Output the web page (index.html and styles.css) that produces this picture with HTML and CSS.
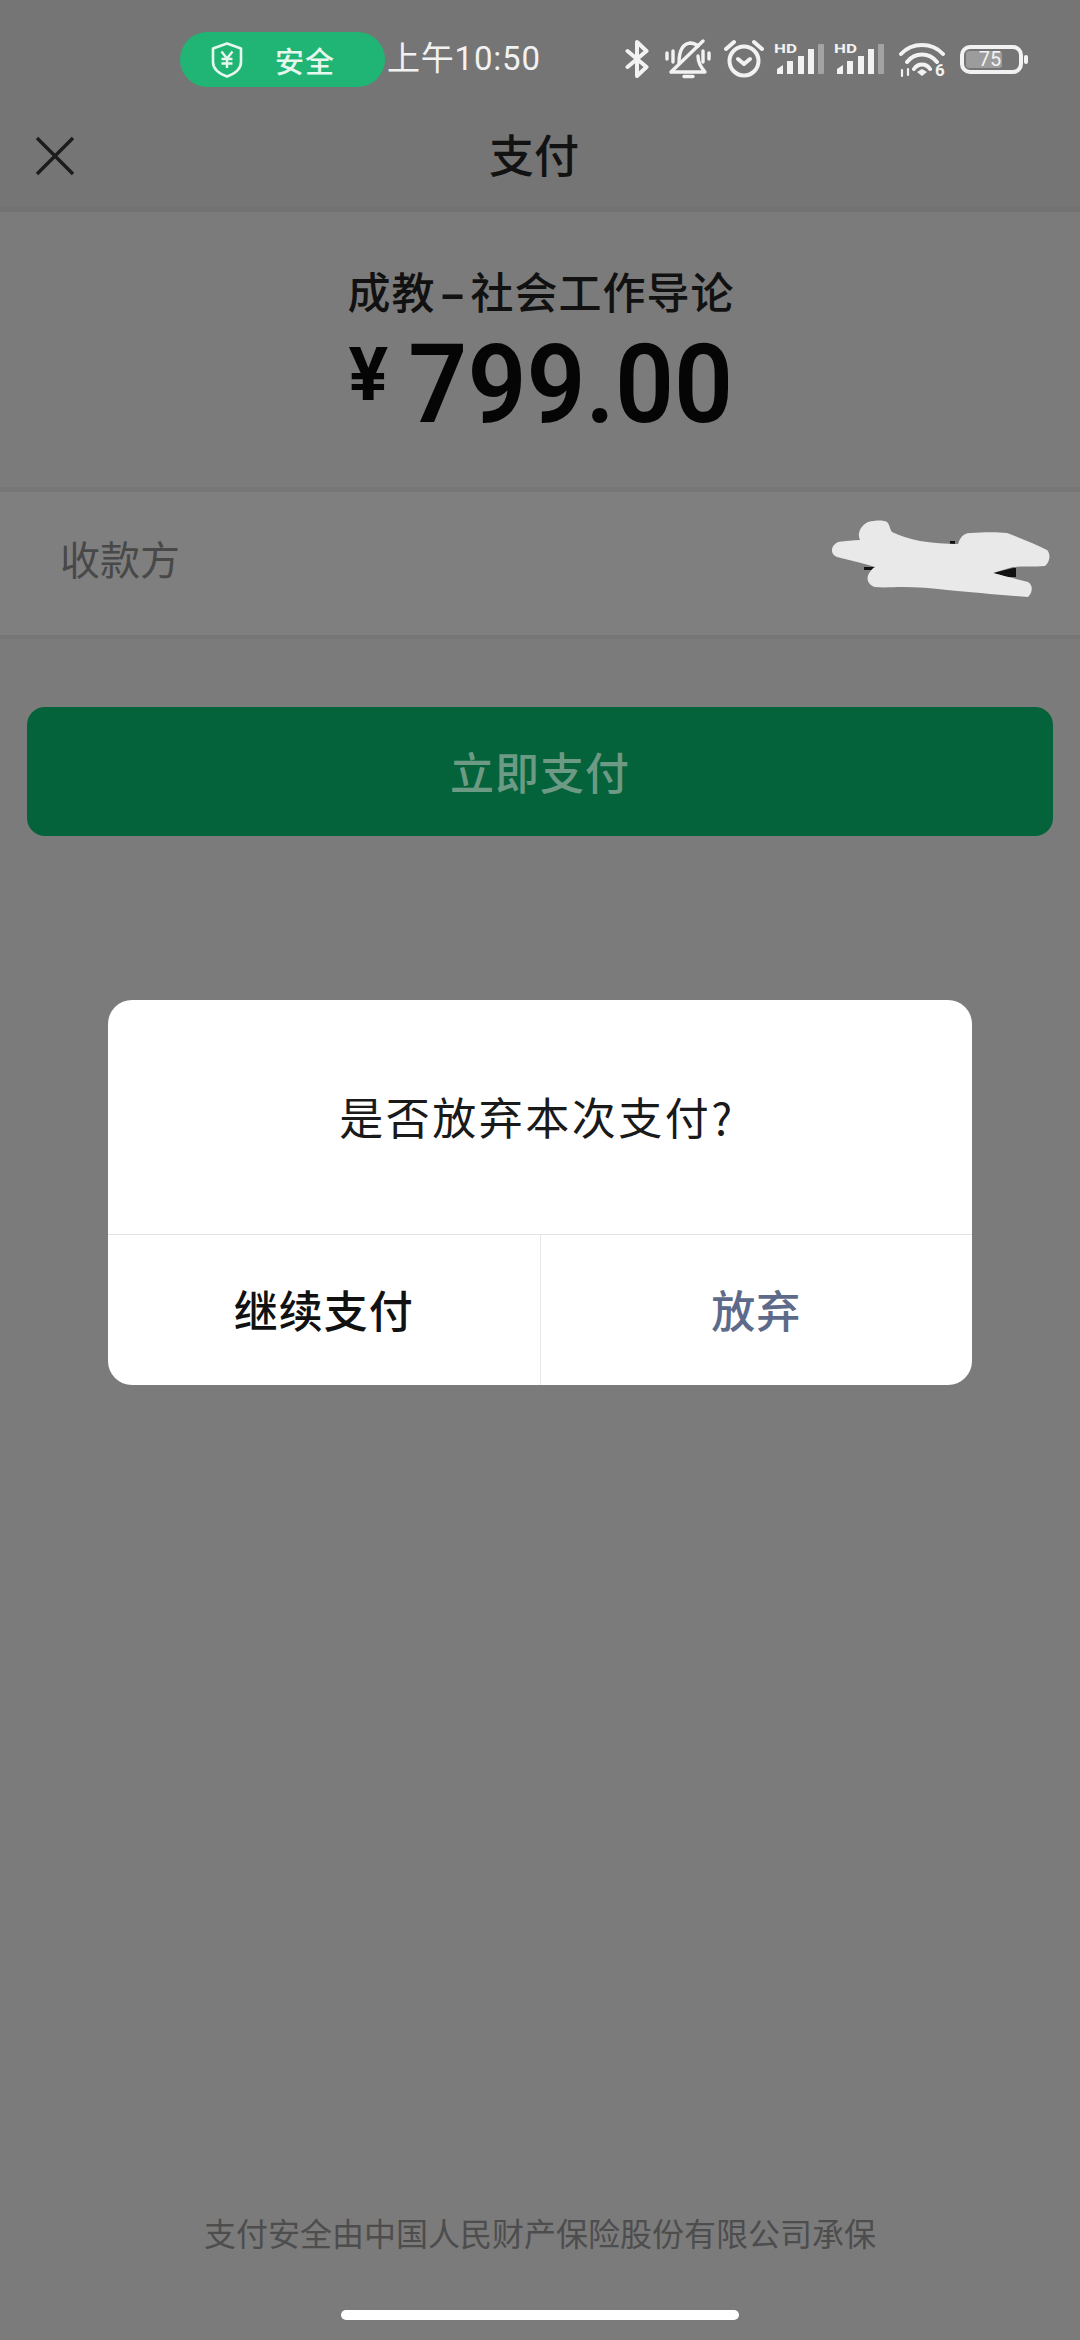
FILE: index.html
```html
<!DOCTYPE html>
<html lang="zh-CN">
<head>
    <meta charset="UTF-8">
    <meta name="viewport" content="width=device-width, initial-scale=1.0">
    <title>支付</title>
    <link rel="stylesheet" href="styles.css">
</head>
<body>
    <div class="page">
        <div class="top">
            <div class="status-bar">
                <div class="safe-pill">
                    <svg class="shield" width="32" height="36" viewBox="0 0 32 36" fill="none" stroke="#e6f7ee" stroke-width="2.6">
                        <path d="M16 1.500 30 6.500V20C30 27 23 32 16 34.500C9 32 2 27 2 20V6.500Z" stroke-linejoin="round"/>
                        <path d="M10.500 9.500 16 16.500 21.500 9.500M16 16.500V26M10.500 17H21.500M10.500 21.500H21.500" stroke-width="2.400"/>
                    </svg>
                    <span class="safe-text">安全</span>
                </div>
                <span class="time">上午10:50</span>
                <div class="status-icons">
                    <svg width="24" height="40" viewBox="0 0 24 40" fill="none" stroke="#f2f2f2" stroke-width="4" stroke-linecap="round" stroke-linejoin="round">
                        <path d="M2.500 12 21.500 28 12 37V3L21.500 12 2.500 28"/>
                    </svg>
                    <svg width="46" height="40" viewBox="0 0 46 40" fill="none" stroke="#f2f2f2" stroke-width="3.400" stroke-linecap="round" stroke-linejoin="round">
                        <path d="M14 24C14 12 17 5 25 4C28 4 31 5 33 7M33 17C33 24 36 28 40 33H7M19 37.500H28"/>
                        <path d="M6 33 38 2"/>
                        <path d="M2 14V20M8 12V23M38 12V23M44 14V20"/>
                    </svg>
                    <svg width="40" height="40" viewBox="0 0 40 40" fill="none" stroke="#f2f2f2" stroke-width="4" stroke-linecap="round" stroke-linejoin="round">
                        <circle cx="20" cy="22" r="14.500"/>
                        <path d="M2 10 10 3M38 10 30 3M14 20 20 25 26 20"/>
                    </svg>
                    <svg width="50" height="44" viewBox="0 -6 50 44">
                        <text class="hd-label" x="0" y="10" textLength="23" lengthAdjust="spacingAndGlyphs">HD</text>
                        <path class="bars" d="M3 26 9 22V31H3ZM13 18H19V31H13ZM24 13H30V31H24ZM34 6H40V31H34Z"/>
                        <rect class="bar-off" x="44" y="1" width="6" height="30" rx="1"/>
                    </svg>
                    <svg width="50" height="44" viewBox="0 -6 50 44">
                        <text class="hd-label" x="0" y="10" textLength="23" lengthAdjust="spacingAndGlyphs">HD</text>
                        <path class="bars" d="M3 26 9 22V31H3ZM13 18H19V31H13ZM24 13H30V31H24ZM34 6H40V31H34Z"/>
                        <rect class="bar-off" x="44" y="1" width="6" height="30" rx="1"/>
                    </svg>
                    <svg width="46" height="42" viewBox="0 -4 46 42" fill="none" stroke="#f2f2f2" stroke-width="4" stroke-linecap="round">
                        <path d="M2 12C13 0 33 0 44 12M8 20C16 10 30 10 38 20M15 27C19 21 27 21 31 27"/>
                        <path d="M18 30 23 27 28 30 23 34Z" fill="#f2f2f2" stroke="none"/>
                        <path d="M3 28V34M9 27V33" stroke-width="2.200"/>
                        <text class="wifi-six" x="36" y="34">6</text>
                    </svg>
                    <div class="battery">
                        <div class="battery-body">
                            <div class="battery-fill"></div>
                            <span class="battery-num">75</span>
                        </div>
                        <div class="battery-tip"></div>
                    </div>
                </div>
            </div>
            <div class="nav-bar">
                <svg class="close-icon" width="40" height="40" viewBox="0 0 40 40" fill="none" stroke="#1c1c1c" stroke-width="3.400">
                    <path d="M2 2 38 38M38 2 2 38"/>
                </svg>
                <span class="nav-title">支付</span>
            </div>
        </div>

        <div class="summary">
            <div class="product-name">成教<span class="dash">-</span>社会工作导论</div>
            <div class="price"><span class="price-sign">¥</span><span class="price-num">799.00</span></div>
        </div>

        <div class="payee-row">
            <span class="payee-label">收款方</span>
            <svg class="payee-mask" width="240" height="96" viewBox="0 0 240 96">
                <path class="mask-ink" d="M44 59H57V62H44ZM130 33H135V37H130ZM173 65 193 60H196V69H187Z"/>
                <path class="mask-fill" d="M40 32C37 26 40 18 48 14C56 12 64 12 67 14C70 17 70 22 72 24C80 28 90 31 100 33C112 35 126 36 138 36C140 30 143 25 150 25C165 24 178 24 187 25C200 30 215 36 227 42C231 46 230 54 225 58C214 59 203 58 193 59C186 61 179 63 173 65C184 68 197 71 208 74C213 77 213 84 208 89C180 87 150 84 127 82C112 80 97 79 83 79C73 79 63 80 55 79C48 77 45 70 50 64C52 61 53 60 55 59C45 56 30 52 17 49C10 46 10 38 18 34C26 33 33 32 40 32Z"/>
            </svg>
        </div>

        <div class="pay-btn">立即支付</div>

        <div class="footer-note">支付安全由中国人民财产保险股份有限公司承保</div>
        <div class="home-bar"></div>

        <div class="dialog">
            <div class="dialog-msg">是否放弃本次支付?</div>
            <div class="dialog-actions">
                <div class="dialog-btn">继续支付</div>
                <div class="dialog-btn dialog-btn-muted">放弃</div>
            </div>
        </div>
    </div>
</body>
</html>
```

FILE: styles.css
```css
* {
    box-sizing: border-box;
}
body {
    margin: 0;
    font-family: "Noto Sans CJK SC", "Noto Sans", sans-serif;
    background-color: #7b7b7b;
}
.page {
    position: relative;
    width: 1080px;
    height: 2340px;
    display: flex;
    flex-direction: column;
    overflow: hidden;
}
.top {
    height: 212px;
    background-color: #757575;
    border-bottom: 5px solid #727272;
}
.status-bar {
    height: 116px;
    padding: 32px 0 0 180px;
    display: flex;
    align-items: flex-start;
}
.safe-pill {
    width: 205px;
    height: 55px;
    padding-left: 31px;
    border-radius: 28px;
    background-color: #20b574;
    display: flex;
    align-items: center;
}
.shield {
    flex-shrink: 0;
}
.safe-text {
    margin-left: 32px;
    font-size: 29px;
    font-weight: 500;
    letter-spacing: 1px;
    color: #e6f7ee;
}
.time {
    margin-left: 2px;
    height: 54px;
    line-height: 54px;
    font-family: Roboto, "Noto Sans CJK SC", sans-serif;
    font-size: 33px;
    letter-spacing: 0.8px;
    color: #f2f2f2;
    white-space: nowrap;
}
.status-icons {
    margin-left: 84px;
    height: 54px;
    display: flex;
    align-items: center;
    gap: 10px;
}
.status-icons svg:nth-child(2) {
    margin-left: 6px;
}
.status-icons svg:nth-child(3) {
    margin-left: 3px;
}
.status-icons svg:nth-child(6) {
    margin-left: 5px;
}
.hd-label {
    font-family: Roboto, sans-serif;
    font-size: 13px;
    font-weight: 700;
    fill: #f2f2f2;
}
.bars {
    fill: #f2f2f2;
}
.bar-off {
    fill: #a3a3a3;
}
.wifi-six {
    font-family: Roboto, sans-serif;
    font-size: 17px;
    font-weight: 700;
    fill: #f2f2f2;
    stroke: none;
}
.battery {
    margin-left: 5px;
    display: flex;
    align-items: center;
    gap: 1px;
}
.battery-body {
    position: relative;
    width: 63px;
    height: 29px;
    border: 4px solid #f2f2f2;
    border-radius: 10px;
    padding: 2px;
}
.battery-fill {
    width: 36px;
    height: 100%;
    border-radius: 3px;
    background-color: #9c9c9c;
}
.battery-num {
    position: absolute;
    left: 15px;
    top: 0;
    line-height: 21px;
    font-family: Roboto, sans-serif;
    font-size: 20px;
    color: #f2f2f2;
}
.battery-tip {
    width: 4px;
    height: 9px;
    border-radius: 2px;
    background-color: #f2f2f2;
}
.nav-bar {
    position: relative;
    height: 82px;
    padding-left: 35px;
    display: flex;
    align-items: flex-start;
}
.close-icon {
    margin-top: 20px;
}
.nav-title {
    position: absolute;
    left: 0;
    right: 12px;
    top: 6px;
    line-height: 64px;
    text-align: center;
    font-size: 45px;
    font-weight: 500;
    color: #121212;
}
.summary {
    height: 275px;
    padding: 46px 0 0 2px;
    display: flex;
    flex-direction: column;
    align-items: center;
}
.product-name {
    line-height: 64px;
    font-size: 43px;
    font-weight: 500;
    letter-spacing: 1px;
    color: #111;
}
.dash {
    display: inline-block;
    margin: 0 9px;
    font-weight: 700;
    transform: scaleX(1.7);
}
.price {
    margin-top: 1px;
    display: flex;
    align-items: baseline;
    line-height: 124px;
    color: #050505;
}
.price-sign {
    position: relative;
    top: -22px;
    margin-right: 20px;
    font-family: Roboto, sans-serif;
    font-size: 74px;
    font-weight: 700;
}
.price-num {
    display: inline-block;
    margin: 0 -10px;
    font-family: Roboto, sans-serif;
    font-size: 110px;
    font-weight: 600;
    transform: scaleX(0.94);
}
.payee-row {
    position: relative;
    height: 152px;
    padding: 0 0 12px 60px;
    background-color: #7f7f7f;
    border-top: 5px solid #767676;
    border-bottom: 4px solid #767676;
    display: flex;
    align-items: center;
}
.payee-label {
    font-size: 40px;
    color: #484848;
}
.payee-mask {
    position: absolute;
    left: 820px;
    top: 16px;
}
.mask-fill {
    fill: #e9e9e9;
}
.mask-ink {
    fill: #111;
}
.pay-btn {
    margin: 68px 27px 0;
    height: 129px;
    line-height: 129px;
    border-radius: 18px;
    background-color: #04633a;
    text-align: center;
    font-size: 44px;
    font-weight: 500;
    letter-spacing: 1px;
    color: #6d9a85;
}
.footer-note {
    margin-top: auto;
    line-height: 50px;
    text-align: center;
    font-size: 32px;
    color: #4d4d4d;
}
.home-bar {
    margin: 53px auto 20px;
    width: 398px;
    height: 10px;
    border-radius: 5px;
    background-color: #fff;
}
.dialog {
    position: absolute;
    left: 108px;
    top: 1000px;
    width: 864px;
    height: 385px;
    border-radius: 24px;
    background-color: #fff;
    display: flex;
    flex-direction: column;
}
.dialog-msg {
    height: 234px;
    padding: 0 6px 2px 0;
    display: flex;
    align-items: center;
    justify-content: center;
    font-size: 44px;
    letter-spacing: 2.500px;
    color: #1a1a1a;
}
.dialog-actions {
    flex: 1;
    border-top: 1px solid #e3e3e3;
    display: flex;
}
.dialog-btn {
    flex: 1;
    padding-bottom: 2px;
    display: flex;
    align-items: center;
    justify-content: center;
    font-size: 44px;
    font-weight: 500;
    letter-spacing: 1px;
    color: #111;
}
.dialog-btn-muted {
    border-left: 1px solid #e8e8e8;
    color: #5d6a89;
}
```
